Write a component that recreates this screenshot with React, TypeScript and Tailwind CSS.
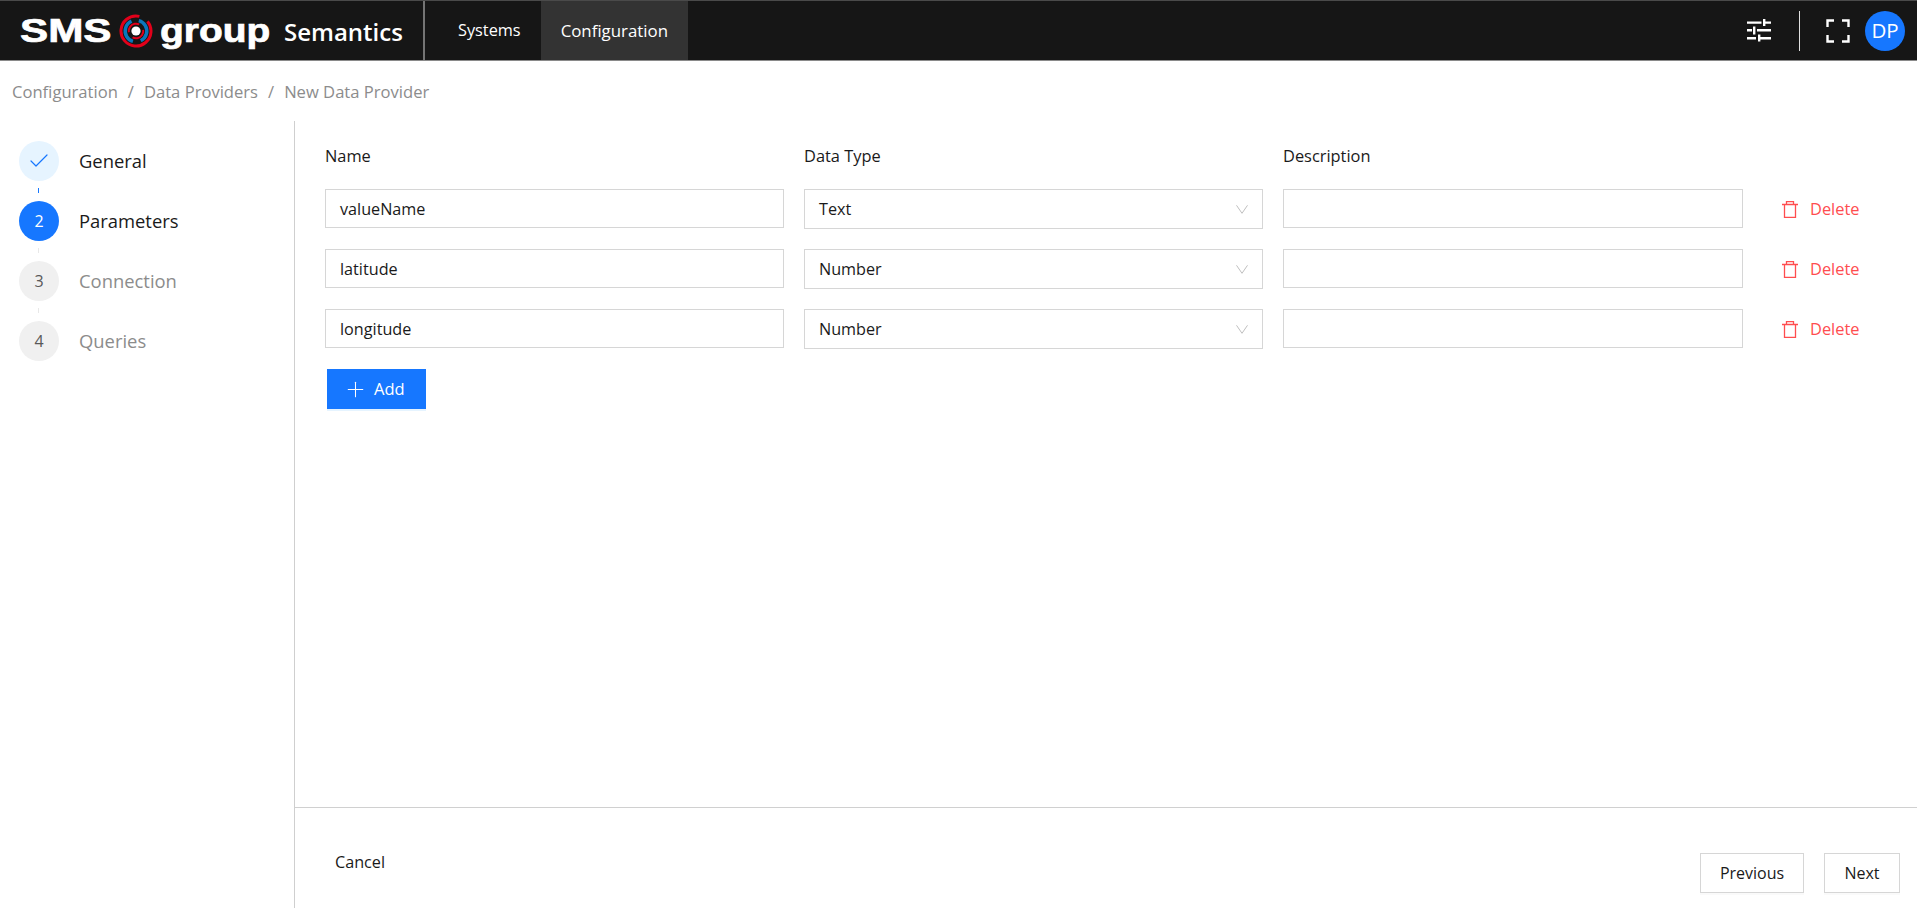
import { Check, Plus } from 'lucide-react'

type Param = { name: string; type: string }

const params: Param[] = [
  { name: 'valueName', type: 'Text' },
  { name: 'latitude', type: 'Number' },
  { name: 'longitude', type: 'Number' },
]

const steps = [
  { label: 'General', state: 'done' },
  { label: 'Parameters', state: 'active' },
  { label: 'Connection', state: 'todo' },
  { label: 'Queries', state: 'todo' },
]

function Logo() {
  const wordmark = "text-[33px] leading-none font-bold [font-family:'Liberation_Sans',sans-serif] [-webkit-text-stroke:0.7px_white]"
  return (
    <div className="flex items-center w-[425px] h-full border-r-2 border-[#747474] pl-[20px] text-white">
      <span className={`w-[92px] origin-left scale-x-[1.28] ${wordmark}`}>SMS</span>
      <svg viewBox="0 0 34 34" className="w-[34px] h-[34px] ml-[7px] shrink-0">
        <circle cx="17" cy="17" r="15" fill="none" stroke="#e2001a" strokeWidth="3" strokeDasharray="84 10" transform="rotate(-40 17 17)" />
        <circle cx="17" cy="17" r="10.800" fill="none" stroke="#0a77bd" strokeWidth="3.500" strokeDasharray="26 8" transform="rotate(-75 17 17)" />
        <circle cx="17" cy="17" r="7.300" fill="none" stroke="#e2001a" strokeWidth="2" strokeDasharray="16 7" transform="rotate(170 17 17)" />
        <circle cx="17" cy="17" r="4.600" fill="#fff" />
      </svg>
      <span className={`w-[109px] ml-[7px] origin-left scale-x-[1.18] ${wordmark}`}>group</span>
      <span className="ml-[15px] text-[24px] font-semibold leading-none pt-[3px]">Semantics</span>
    </div>
  )
}

function Header() {
  return (
    <header className="flex items-stretch h-[61px] bg-[#161616] border-t border-b border-t-[#4a4a4a] border-b-[#8a8a8a] text-white">
      <Logo />
      <nav className="flex ml-[12px]">
        <a className="flex items-center pl-[21px] pr-[20px] text-[16.300px]">Systems</a>
        <a className="flex items-center px-[20px] bg-[#333333] text-[16.850px]">Configuration</a>
      </nav>
      <div className="flex items-center ml-auto pr-[12px]">
        <svg viewBox="0 0 24 23" className="w-[24px] h-[23px]" fill="#fff">
          <path d="M0 2.400h14.500v2.400H0zM16 0h2.400v7H16zM18.400 2.400H24v2.400h-5.600zM0 10h5v2.400H0zM6 7.500h2.400v8H6zM10 10h14v2.400H10zM0 18h9v2.400H0zM11 15.500h2.400v7H11zM13.400 18H24v2.400H13.400z" />
        </svg>
        <div className="w-px h-[40px] bg-[#e0e0e0] ml-[28px]" />
        <svg viewBox="0 0 24 24" className="w-[24px] h-[24px] ml-[26px]" fill="none" stroke="#fff" strokeWidth="2.400">
          <path d="M1.500 8V1.500H8M16 1.500h6.500V8M22.500 16v6.500H16M8 22.500H1.500V16" />
        </svg>
        <div className="flex items-center justify-center w-[40px] h-[40px] ml-[15px] rounded-full bg-[#1677ff] text-[20.500px]">DP</div>
      </div>
    </header>
  )
}

function Breadcrumb() {
  return (
    <div className="flex items-center h-[60px] pt-[2px] pl-[12px] text-[16.600px] text-[#8c8c8c]">
      <span>Configuration</span>
      <span className="mx-[10px]">/</span>
      <span>Data Providers</span>
      <span className="mx-[10px]">/</span>
      <span>New Data Provider</span>
    </div>
  )
}

function Sidebar() {
  return (
    <aside className="w-[295px] shrink-0 border-r border-[#cfcfcf] pt-[20px] pl-[19px]">
      {steps.map((s, i) => (
        <div key={s.label}>
          {i > 0 && (
            <div className={`w-px h-[5px] ml-[19px] mt-[7px] mb-[8px] ${i === 1 ? 'bg-[#1677ff]' : 'bg-[#e8e8e8]'}`} />
          )}
          <div className="flex items-center h-[40px]">
            <div
              className={`flex items-center justify-center w-[40px] h-[40px] rounded-full text-[16px] ${
                s.state === 'done' ? 'bg-[#e6f4ff]' : s.state === 'active' ? 'bg-[#1677ff] text-white' : 'bg-[#f0f0f0] text-[#595959]'
              }`}
            >
              {s.state === 'done' ? <Check className="w-[24px] h-[24px] text-[#1677ff]" strokeWidth={1.2} /> : i + 1}
            </div>
            <span className={`ml-[20px] text-[18.400px] ${s.state === 'todo' ? 'text-[#8c8c8c]' : 'text-[#1a1a1a]'}`}>{s.label}</span>
          </div>
        </div>
      ))}
    </aside>
  )
}

function ParamRow({ name, type }: Param) {
  return (
    <div className="flex items-start gap-[20px]">
      <div className="flex items-center w-[459px] h-[39px] px-[14px] pt-[1px] border border-[#d6d6d6] text-[16.200px] text-[#1a1a1a]">{name}</div>
      <div className="flex items-center justify-between w-[459px] h-[40px] px-[14px] border border-[#d6d6d6] text-[16.200px] text-[#1a1a1a]">
        {type}
        <svg viewBox="0 0 12 9" className="w-[12px] h-[9px]" fill="none" stroke="#bfbfbf" strokeWidth="1">
          <path d="M0.500 0.300L6 8.300L11.500 0.300" />
        </svg>
      </div>
      <div className="w-[460px] h-[39px] border border-[#d6d6d6]" />
      <div className="flex items-center h-[39px] ml-[19px] text-[16.400px] text-[#ff4d4f]">
        <svg viewBox="0 0 16 17" className="w-[16px] h-[17px] mt-[2px]" fill="none" stroke="#ff4d4f" strokeWidth="1.300">
          <path d="M0 3.500h16M4.500 3.500V0.700h7v2.800M2.500 3.500v12.800h11V3.500" />
        </svg>
        <span className="ml-[12px] pt-[1px]">Delete</span>
      </div>
    </div>
  )
}

export default function App() {
  return (
    <div className="flex flex-col h-[908px] bg-white [font-family:'Open_Sans','Noto_Sans',sans-serif]">
      <Header />
      <Breadcrumb />
      <div className="flex flex-1 min-h-0">
        <Sidebar />
        <main className="flex flex-col flex-1 min-w-0">
          <div className="flex-1 pl-[30px] pt-[23px]">
            <div className="flex gap-[20px] h-[24px] text-[16.400px] text-[#1a1a1a]">
              <div className="w-[459px]">Name</div>
              <div className="w-[459px]">Data Type</div>
              <div className="w-[460px]">Description</div>
            </div>
            <div className="flex flex-col gap-[20px] mt-[21px]">
              {params.map((p) => (
                <ParamRow key={p.name} {...p} />
              ))}
            </div>
            <button className="flex items-center w-[99px] h-[40px] ml-[2px] mt-[20px] pl-[16px] bg-[#1677ff] text-white text-[16.500px] shadow-[0_2px_0_rgba(5,145,255,0.1)]">
              <Plus className="w-[25px] h-[25px] mr-[6px]" strokeWidth={1} />
              Add
            </button>
          </div>
          <footer className="flex h-[101px] border-t border-[#d0d0d0] text-[16px] text-[#1a1a1a]">
            <div className="pl-[40px] pt-[42px] text-[16.200px]">Cancel</div>
            <div className="flex gap-[20px] ml-auto pr-[17px] pt-[45px]">
              <button className="w-[104px] h-[40px] border border-[#d6d6d6] shadow-[0_2px_0_rgba(0,0,0,0.02)]">Previous</button>
              <button className="w-[76px] h-[40px] border border-[#d6d6d6] shadow-[0_2px_0_rgba(0,0,0,0.02)]">Next</button>
            </div>
          </footer>
        </main>
      </div>
    </div>
  )
}
